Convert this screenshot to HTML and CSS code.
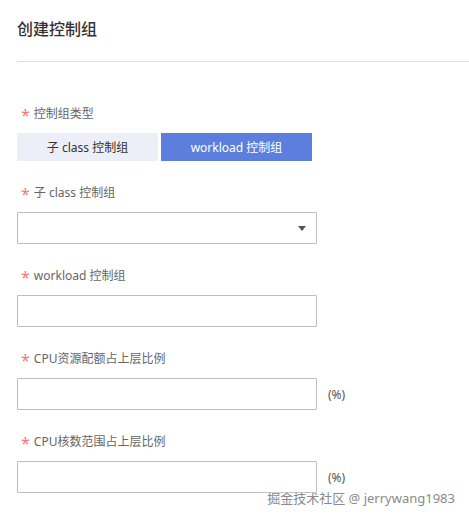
FILE: index.html
```html
<!DOCTYPE html>
<html lang="zh-CN">
<head>
<meta charset="utf-8">
<link rel="stylesheet" href="styles.css">
</head>
<body>
<div class="page">
  <header class="header"><h1 class="title">创建控制组</h1></header>
  <form class="form">
    <div class="field first">
      <div class="label"><span class="req">*</span>控制组类型</div>
      <div class="seg">
        <button type="button" class="seg-btn">子 class 控制组</button>
        <button type="button" class="seg-btn active">workload 控制组</button>
      </div>
    </div>
    <div class="field">
      <div class="label"><span class="req">*</span>子 class 控制组</div>
      <div class="control-row">
        <div class="select"><span class="caret"></span></div>
      </div>
    </div>
    <div class="field">
      <div class="label"><span class="req">*</span>workload 控制组</div>
      <div class="control-row">
        <div class="input"></div>
      </div>
    </div>
    <div class="field">
      <div class="label"><span class="req">*</span>CPU资源配额占上层比例</div>
      <div class="control-row">
        <div class="input"></div><span class="unit">(%)</span>
      </div>
    </div>
    <div class="field">
      <div class="label"><span class="req">*</span>CPU核数范围占上层比例</div>
      <div class="control-row">
        <div class="input"></div><span class="unit">(%)</span>
      </div>
    </div>
  </form>
  <div class="watermark">掘金技术社区 @ jerrywang1983</div>
</div>
</body>
</html>
```
FILE: styles.css
```css
html, body {
  margin: 0;
  padding: 0;
  background: #fff;
}
body {
  font-family: "Noto Sans", "Noto Sans CJK SC", sans-serif;
  color: #333;
}
.page {
  position: relative;
  width: 469px;
  height: 520px;
  padding-left: 17px;
  box-sizing: border-box;
  overflow: hidden;
}
.header {
  padding: 18px 0 21px;
  border-bottom: 1px solid #dcdcdc;
}
.title {
  margin: 0;
  font-size: 16px;
  line-height: 22px;
  font-weight: 500;
  color: #333;
}
.form {
  display: flex;
  flex-direction: column;
}
.field {
  display: flex;
  flex-direction: column;
  gap: 11px;
  margin-top: 24px;
}
.field.first {
  margin-top: 44px;
}
.label {
  font-size: 12px;
  line-height: 16px;
  color: #666;
  padding-left: 4px;
  display: flex;
  align-items: center;
}
.req {
  color: #f07a7a;
  font-size: 16px;
  line-height: 16px;
  margin-right: 4px;
  position: relative;
  top: 1px;
}
.seg {
  display: flex;
  gap: 3px;
  height: 28px;
}
.seg-btn {
  border: none;
  margin: 0;
  padding: 0;
  font-family: inherit;
  font-size: 12px;
  color: #333;
  background: #eceff8;
  width: 141px;
  height: 28px;
}
.seg-btn.active {
  background: #5c7fdd;
  color: #fff;
  width: 151px;
}
.control-row {
  display: flex;
  align-items: center;
  gap: 11px;
}
.input, .select {
  width: 300px;
  height: 32px;
  box-sizing: border-box;
  border: 1px solid #bdbdbd;
  border-radius: 1px;
  background: #fff;
}
.select {
  display: flex;
  justify-content: flex-end;
  align-items: center;
  padding-right: 10px;
}
.caret {
  width: 0;
  height: 0;
  border-left: 4px solid transparent;
  border-right: 4px solid transparent;
  border-top: 5px solid #555;
}
.unit {
  font-size: 12px;
  color: #555;
}
.watermark {
  position: absolute;
  right: 14px;
  top: 489px;
  font-size: 13px;
  line-height: 18px;
  color: #8a8a8a;
  text-shadow: 0 0 3px #fff, 0 0 2px #fff;
}
```
